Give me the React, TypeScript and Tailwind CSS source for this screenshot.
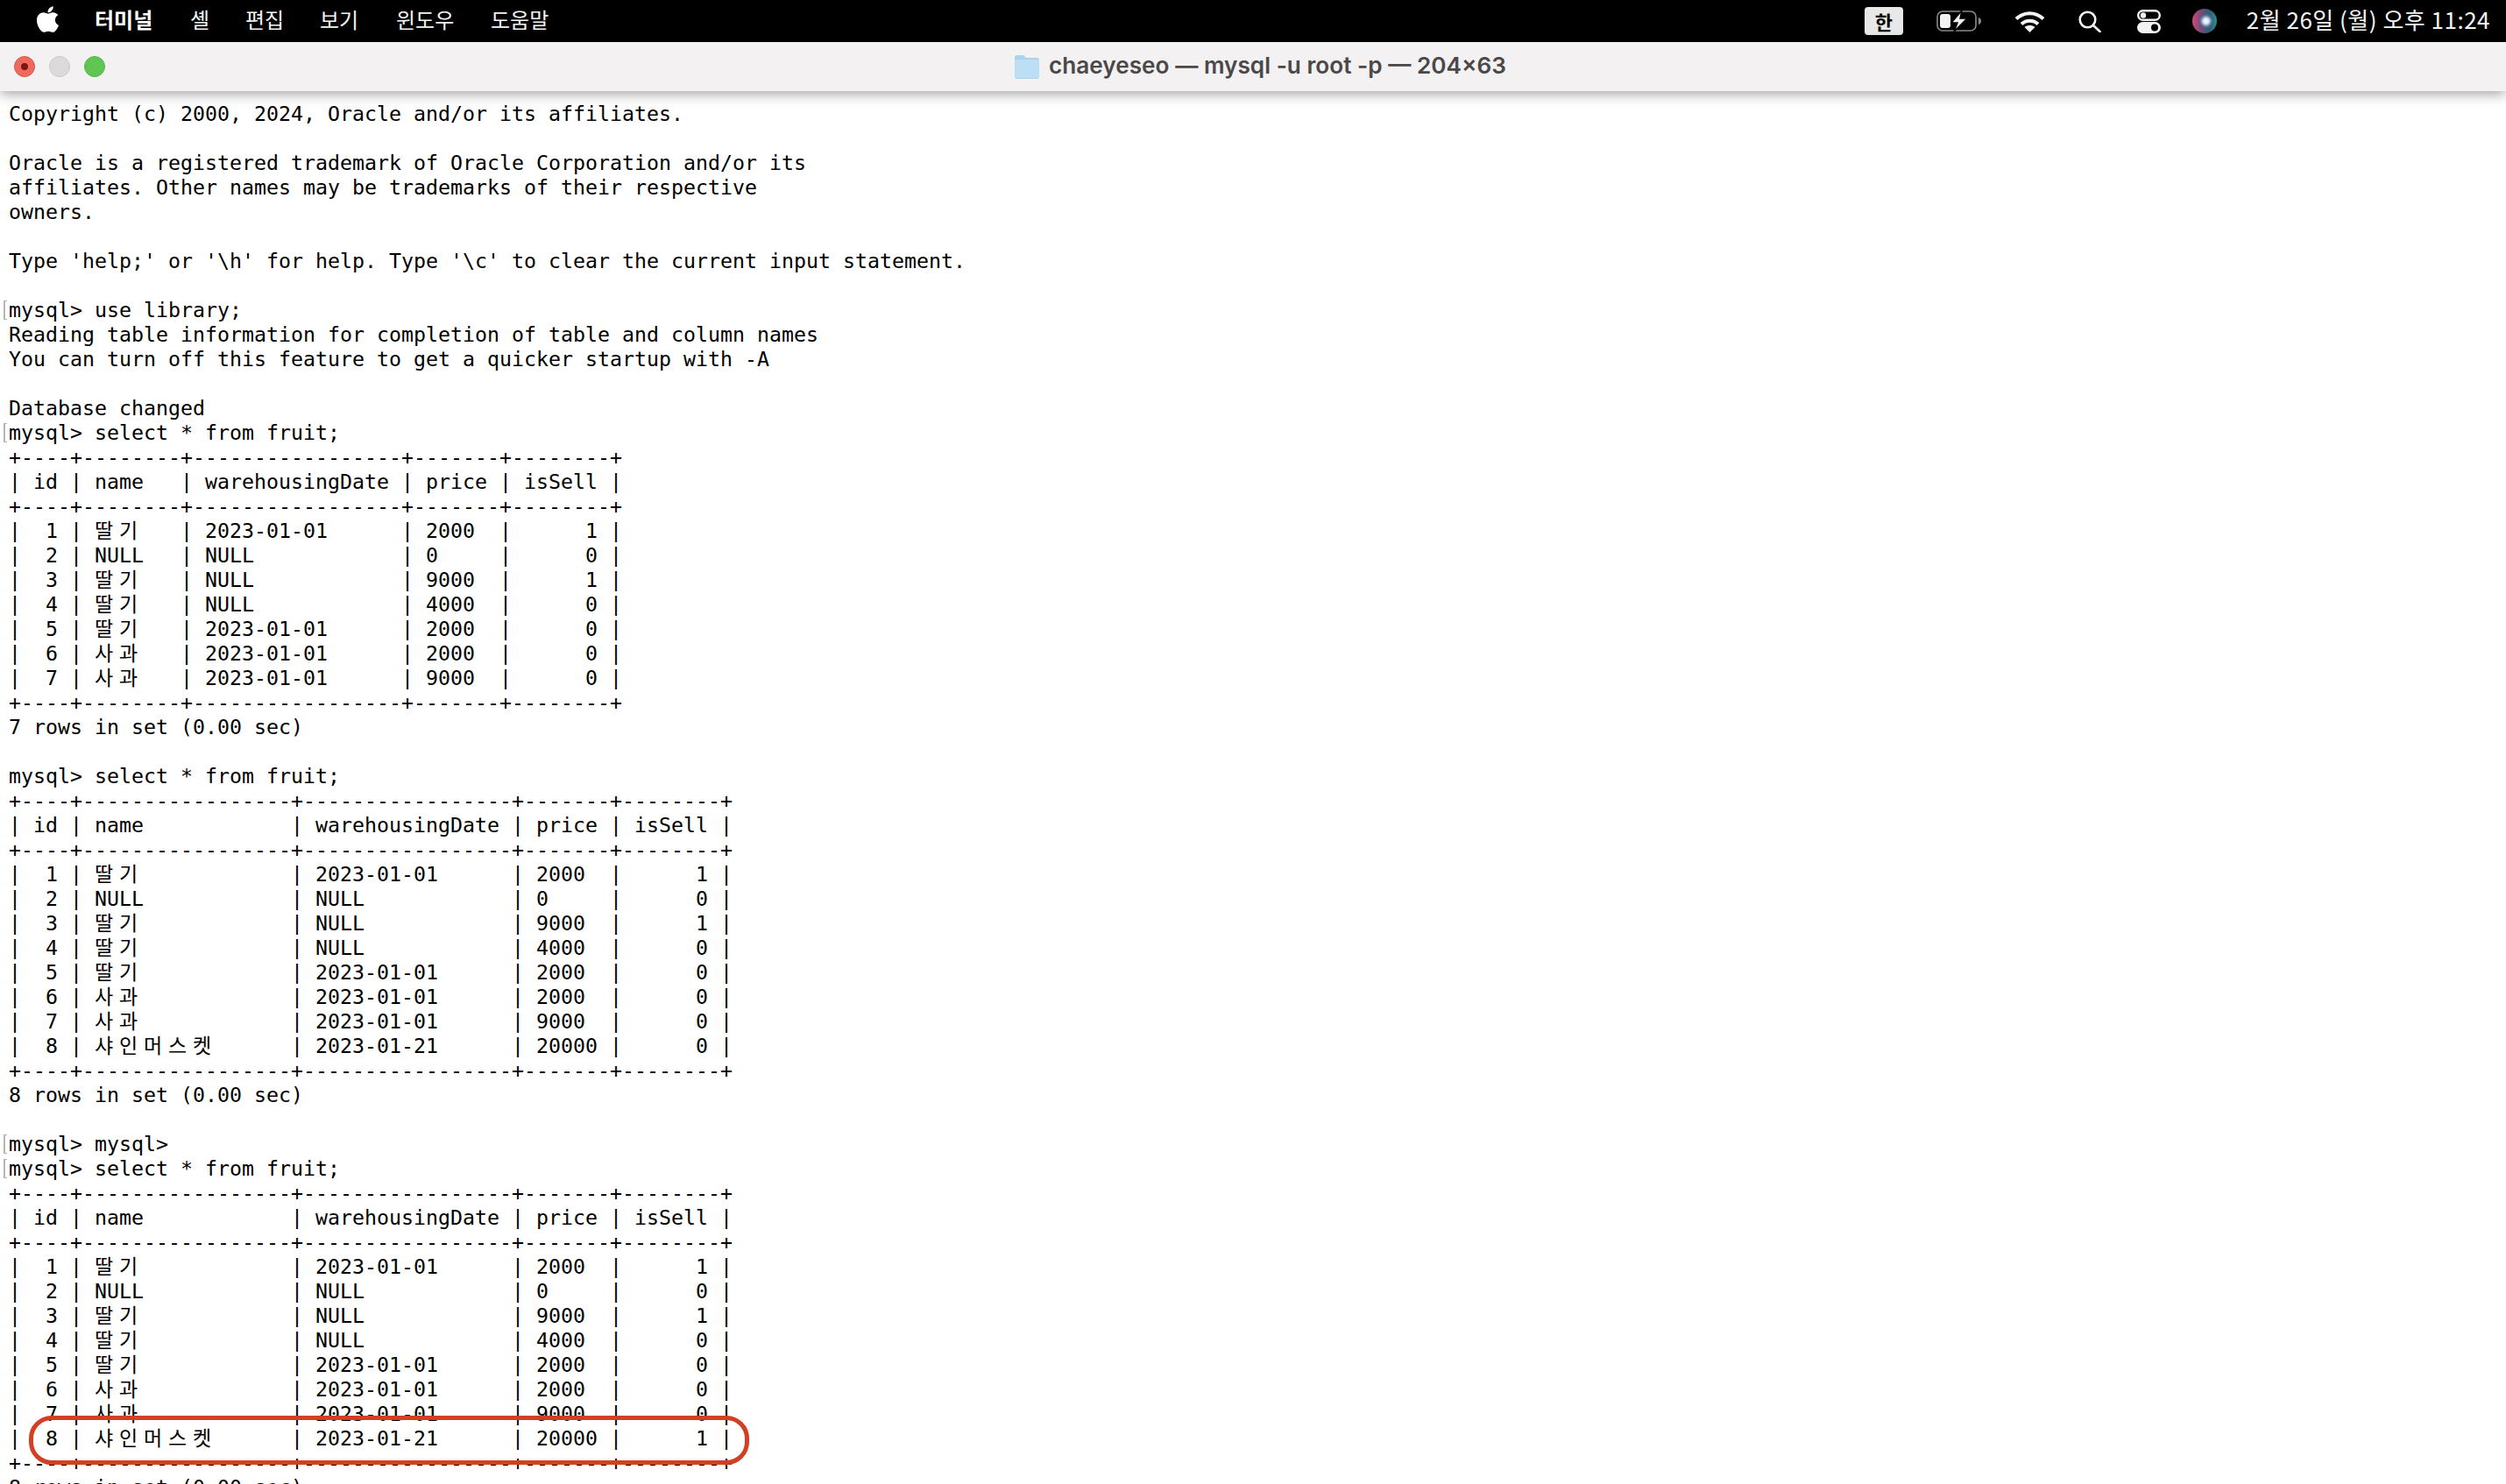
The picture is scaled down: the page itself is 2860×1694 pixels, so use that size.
import React from 'react';
import { FaApple } from 'react-icons/fa';

type Row = [number, string, string, string, number];

const baseRows: Row[] = [
  [1, '딸기', '2023-01-01', '2000', 1],
  [2, 'NULL', 'NULL', '0', 0],
  [3, '딸기', 'NULL', '9000', 1],
  [4, '딸기', 'NULL', '4000', 0],
  [5, '딸기', '2023-01-01', '2000', 0],
  [6, '사과', '2023-01-01', '2000', 0],
  [7, '사과', '2023-01-01', '9000', 0],
];

const isHangul = (c: string) => /[\uac00-\ud7a3]/.test(c);
const cellWidth = (s: string) => [...s].reduce((n, c) => n + (isHangul(c) ? 2 : 1), 0);
const padName = (s: string, w: number) => s + ' '.repeat(w - cellWidth(s));

function table(rows: Row[], nameWidth: number): string[] {
  const border = `+----+${'-'.repeat(nameWidth + 2)}+-----------------+-------+--------+`;
  const body = rows.map(
    ([id, name, date, price, sell]) =>
      `| ${String(id).padStart(2)} | ${padName(name, nameWidth)} | ${date.padEnd(15)} | ${price.padEnd(5)} | ${String(sell).padStart(6)} |`
  );
  return [
    border,
    `| id | ${'name'.padEnd(nameWidth)} | warehousingDate | price | isSell |`,
    border,
    ...body,
    border,
  ];
}

const lines: string[] = [
  'Copyright (c) 2000, 2024, Oracle and/or its affiliates.',
  '',
  'Oracle is a registered trademark of Oracle Corporation and/or its',
  'affiliates. Other names may be trademarks of their respective',
  'owners.',
  '',
  "Type 'help;' or '\\h' for help. Type '\\c' to clear the current input statement.",
  '',
  '[mysql> use library;',
  'Reading table information for completion of table and column names',
  'You can turn off this feature to get a quicker startup with -A',
  '',
  'Database changed',
  '[mysql> select * from fruit;',
  ...table(baseRows, 6),
  '7 rows in set (0.00 sec)',
  '',
  'mysql> select * from fruit;',
  ...table([...baseRows, [8, '샤인머스켓', '2023-01-21', '20000', 0]], 15),
  '8 rows in set (0.00 sec)',
  '',
  '[mysql> mysql>',
  '[mysql> select * from fruit;',
  ...table([...baseRows, [8, '샤인머스켓', '2023-01-21', '20000', 1]], 15),
  '8 rows in set (0.00 sec)',
];

function TermLine({ text }: { text: string }) {
  const marked = text.startsWith('[');
  const body = marked ? text.slice(1) : text;
  return (
    <div className="flex h-[28px] leading-[28px]">
      <div className="w-[10px] shrink-0 pl-[4px] pt-[3px]">
        {marked && <div className="h-[22px] w-[4px] border-y border-l-2 border-[#b5b5b5]" />}
      </div>
      <div className="whitespace-pre">
        {[...body].map((c, i) =>
          isHangul(c) ? (
            <span key={i} className="font-['Noto_Sans_CJK_KR',sans-serif] text-[23px] leading-none tracking-[6.84px]">
              {c}
            </span>
          ) : (
            c
          )
        )}
      </div>
    </div>
  );
}

function BatteryIcon() {
  return (
    <svg width="52" height="24" viewBox="0 0 52 24" fill="none">
      <rect x="1" y="1" width="44" height="22" rx="6" stroke="#8a8a8a" strokeWidth="1.6" />
      <path d="M48 8c2 .6 3 2 3 4s-1 3.4-3 4z" fill="#8a8a8a" />
      <rect x="4" y="4" width="12" height="16" rx="3" fill="#f2f2f2" />
      <path d="M29 0 L17 14 H24 L20 24 L35 9 H27 Z" fill="#f2f2f2" stroke="#000" strokeWidth="1.5" />
    </svg>
  );
}

function WifiIcon() {
  return (
    <svg width="35" height="25" viewBox="0 0 35 25" fill="none" stroke="#f2f2f2" strokeWidth="4">
      <path d="M2 9.500C11 1 24 1 33 9.500" />
      <path d="M8 15.500c5.500-5 13.500-5 19 0" />
      <path d="M17.500 25l-6-6c3.500-2.600 8.500-2.600 12 0z" fill="#f2f2f2" stroke="none" />
    </svg>
  );
}

function SearchIcon() {
  return (
    <svg width="26" height="25" viewBox="0 0 26 25" fill="none" stroke="#f2f2f2" strokeWidth="2.600" strokeLinecap="round">
      <circle cx="10.500" cy="10.500" r="8.800" />
      <path d="M17 17l7.500 7" />
    </svg>
  );
}

function ControlIcon() {
  return (
    <svg width="27" height="27" viewBox="0 0 27 27">
      <rect x="1.200" y="1.200" width="24.600" height="10.600" rx="5.300" fill="none" stroke="#f2f2f2" strokeWidth="2.400" />
      <circle cx="7" cy="6.500" r="3.200" fill="#f2f2f2" />
      <rect x="0" y="14" width="27" height="13" rx="6.500" fill="#f2f2f2" />
      <circle cx="20" cy="20.500" r="4" fill="#000" />
    </svg>
  );
}

function SiriIcon() {
  return (
    <svg width="28" height="28" viewBox="0 0 28 28">
      <defs>
        <radialGradient id="siriCore" cx="56%" cy="50%" r="34%">
          <stop offset="0%" stopColor="#ffffff" />
          <stop offset="35%" stopColor="#d5e3f2" />
          <stop offset="70%" stopColor="#5d7ea6" stopOpacity="0.65" />
          <stop offset="100%" stopColor="#2c4a6a" stopOpacity="0" />
        </radialGradient>
        <linearGradient id="siriBase" x1="0" y1="0.5" x2="1" y2="0.5">
          <stop offset="0%" stopColor="#d4497a" />
          <stop offset="35%" stopColor="#7a4a78" />
          <stop offset="70%" stopColor="#2e5f78" />
          <stop offset="100%" stopColor="#2f8f8f" />
        </linearGradient>
      </defs>
      <circle cx="14" cy="14" r="14" fill="url(#siriBase)" />
      <circle cx="14" cy="14" r="14" fill="url(#siriCore)" />
    </svg>
  );
}

function FolderIcon() {
  return (
    <svg width="30" height="28" viewBox="0 0 30 28">
      <path d="M1 4a3 3 0 0 1 3-3h7l3 3h12a3 3 0 0 1 3 3v18a3 3 0 0 1-3 3H4a3 3 0 0 1-3-3z" fill="#a9d2ef" />
      <rect x="1" y="6" width="28" height="21" rx="2" fill="#bcdff6" />
    </svg>
  );
}

export default function App() {
  return (
    <div className="relative h-screen w-full overflow-hidden bg-white">
      {/* Menu bar */}
      <div className="flex h-[48px] items-center bg-black pl-[41px] pr-[18px] font-['Noto_Sans_CJK_KR',sans-serif] text-[24px] text-[#f4f4f4]">
        <FaApple className="h-[34px] w-[27px] -translate-y-[2px] text-white" />
        <span className="ml-[40px] w-[67px] -translate-y-[2px] whitespace-pre font-bold text-white">터미널</span>
        <span className="ml-[42px] w-[22px] -translate-y-[2px]">셸</span>
        <span className="ml-[41px] w-[45px] -translate-y-[2px] whitespace-pre">편집</span>
        <span className="ml-[40px] w-[46px] -translate-y-[2px] whitespace-pre">보기</span>
        <span className="ml-[41px] w-[69px] -translate-y-[2px] whitespace-pre">윈도우</span>
        <span className="ml-[39px] w-[69px] -translate-y-[2px] whitespace-pre">도움말</span>
        <div className="ml-auto flex items-center">
          <div className="flex h-[32px] w-[44px] items-center justify-center rounded-[4px] bg-[#e8e8e8] text-[22px] font-bold text-black">
            한
          </div>
          <div className="ml-[38px] flex">
            <BatteryIcon />
          </div>
          <div className="ml-[37px] flex">
            <WifiIcon />
          </div>
          <div className="ml-[38px] flex">
            <SearchIcon />
          </div>
          <div className="ml-[41px] flex">
            <ControlIcon />
          </div>
          <div className="ml-[36px] flex">
            <SiriIcon />
          </div>
          <span className="ml-[34px] -translate-y-[3px] whitespace-pre text-[26px] tracking-[0.5px]">2월 26일 (월) 오후 11:24</span>
        </div>
      </div>

      {/* Title bar */}
      <div className="relative z-10 flex h-[56px] items-center bg-[#f3f1f2] pl-[16px] shadow-[0_3px_14px_rgba(0,0,0,0.38)]">
        <div className="flex gap-[16px]">
          <div className="flex h-[24px] w-[24px] items-center justify-center rounded-full border border-[#d9574b] bg-[#ee6a5f]">
            <div className="h-[8px] w-[8px] rounded-full bg-[#7a1710]" />
          </div>
          <div className="h-[24px] w-[24px] rounded-full border border-[#c9c8c9] bg-[#dcdbdc]" />
          <div className="h-[24px] w-[24px] rounded-full border border-[#55b449] bg-[#61c554]" />
        </div>
        <div className="ml-[1037px] flex items-center gap-[10px]">
          <FolderIcon />
          <span className="-translate-y-[1px] font-['Inter',sans-serif] text-[26.2px] font-semibold text-[#4a4848]">
            chaeyeseo — mysql -u root -p — 204×63
          </span>
        </div>
      </div>

      {/* Terminal */}
      <div className="pt-[12px] font-['DejaVu_Sans_Mono',monospace] text-[23.25px] text-black">
        {lines.map((l, i) => (
          <TermLine key={i} text={l} />
        ))}
      </div>

      {/* Red annotation */}
      <div className="absolute left-[33px] top-[1616px] h-[56px] w-[822px] rounded-[26px] border-[5px] border-[#d23f22]" />
    </div>
  );
}
